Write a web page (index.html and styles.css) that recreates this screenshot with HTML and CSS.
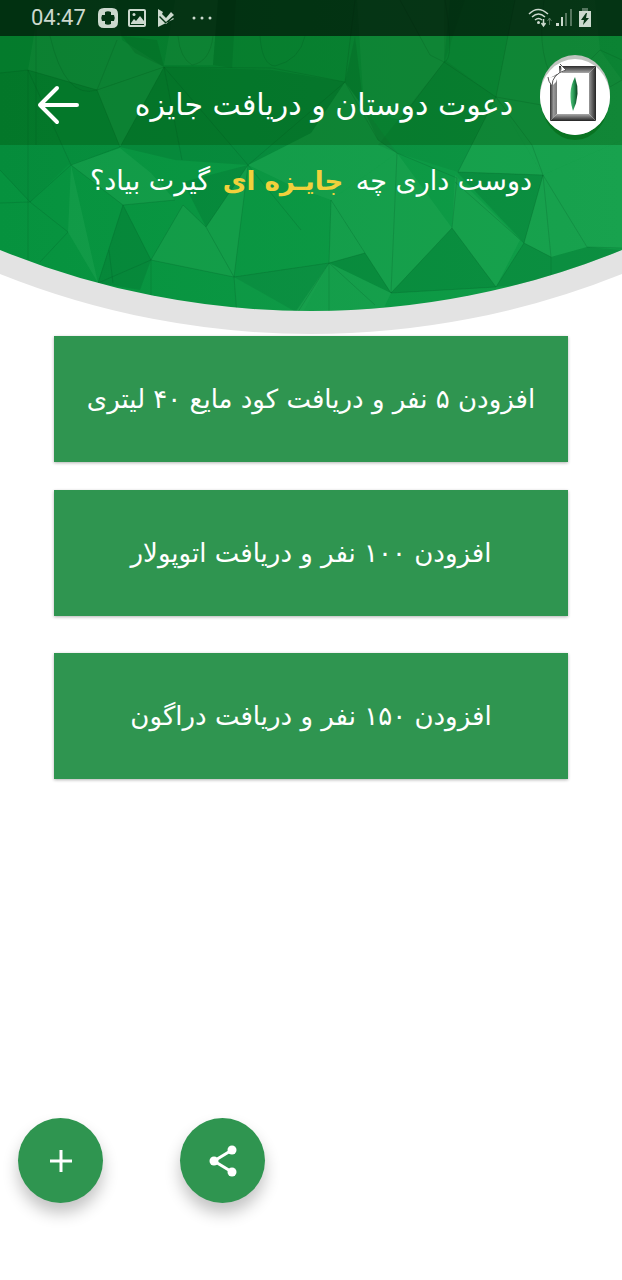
FILE: index.html
```html
<!DOCTYPE html>
<html lang="fa" dir="rtl">
<head>
<meta charset="utf-8">
<meta name="viewport" content="width=device-width, initial-scale=1">
<title>دعوت دوستان و دریافت جایزه</title>
<link rel="stylesheet" href="styles.css">
</head>
<body>
<div class="screen">
  <header class="hero">
    <svg class="hero-art" viewBox="0 0 622 335" preserveAspectRatio="none" aria-hidden="true">
      <defs>
        <linearGradient id="base" x1="0" y1="0" x2="1" y2="0">
          <stop offset="0" stop-color="#06923e"/><stop offset="1" stop-color="#109d48"/>
        </linearGradient>
        <clipPath id="bowl"><path d="M0 0H622V250A823 823 0 0 1 0 250Z"/></clipPath>
      </defs>
      <path d="M0 0H622V274A836 836 0 0 1 0 274Z" fill="#e3e3e3"/>
      <g clip-path="url(#bowl)">
        <rect width="622" height="335" fill="url(#base)"/>
        <g fill="#35b566" fill-opacity=".22">
          <path d="M28 70L40 0L115 0L122 40L164 67L97 90Z"/>
          <path d="M97 90L164 67L120 147Z"/>
          <path d="M71 165L120 148L151 173L175 200L123 205Z"/>
          <path d="M71 165L98 283L68 232Z"/>
          <path d="M164 65L175 0L218 0L213 65Z"/>
          <path d="M183 205L206 227L234 277L151 260Z"/>
          <path d="M248 165L311 133L345 82L397 153L331 200L290 185Z"/>
          <path d="M248 165L206 227L234 277Z"/>
          <path d="M234 277L329 263L300 318L237 318Z" fill-opacity=".1"/>
          <path d="M397 153L452 228L391 293L365 253L331 200Z"/>
          <path d="M331 200L365 253L329 263Z"/>
          <path d="M458 172L496 97L543 175Z"/>
          <path d="M452 228L455 175L520 240L496 287Z"/>
          <path d="M543 175L622 140V248L587 247L551 257L524 243Z"/>
          <path d="M357 0L450 0L444 62L400 120L364 110Z"/>
          <path d="M496 97L515 0H595L600 50L622 80V140L543 175Z"/>
          <path d="M329 263L391 293L382 312L295 312Z"/>
        </g>
        <g fill="#00642b" fill-opacity=".24">
          <path d="M122 36L157 40L164 67L135 53Z"/>
          <path d="M164 67L272 70L345 82L311 133L248 165L175 160L120 147Z"/>
          <path d="M0 73L28 70L97 90L120 147L68 165L30 202L0 170Z" fill-opacity=".12"/>
          <path d="M123 205L151 260L140 290L98 283Z"/>
          <path d="M183 182L248 165L206 227Z"/>
          <path d="M234 277L329 263L296 312Z" fill-opacity=".18"/>
          <path d="M345 82L397 153L378 140L364 110L355 36Z"/>
          <path d="M457 172L543 175L524 243Z"/>
          <path d="M452 228L496 287L391 293Z"/>
          <path d="M524 243L551 257L587 247L622 250L550 282L496 287Z"/>
          <path d="M329 263L365 253L391 293Z"/>
          <path d="M218 0H236L232 68L213 65Z"/>
          <path d="M444 0H465L445 60L496 97L458 172L397 153L378 145L444 62Z" fill-opacity=".12"/>
        </g>
        <g fill="none" stroke="#004f22" stroke-opacity=".2" stroke-width="1">
          <path d="M28 70L97 90L164 67L272 68L345 82M28 70V260M36 0V145M0 73L28 70L71 165L123 205M50 36Q65 100 97 90L117 40M97 90L120 147L164 67L182 160M71 165L30 202L0 170M0 203L30 202L68 232L40 262"/>
          <path d="M120 147L71 165M123 205L175 200M123 205L98 283L151 260L123 205M109 250L113 283M151 260L183 205L206 227L234 277L151 260V300M206 227L248 165L234 277L237 315M248 165L301 230M234 277L329 263M164 67L248 165L345 82"/>
          <path d="M345 82L355 0M345 82L378 140L397 153L391 293L365 253L331 200L329 263L365 253M391 293L452 228L496 287L391 293M397 153L457 178L452 228M458 172L543 175L524 243L455 182M444 62L496 97L458 172M444 62L400 120M496 97L515 0M496 97L570 110L622 80M543 175L551 257L524 243L496 287M543 175L587 247L622 248M551 257V282M543 175L532 145L496 97M544 0Q535 60 560 90L600 50L622 60M445 0Q455 60 444 62L430 55L400 0M329 263L296 315M329 263L375 305M329 263V311M260 36Q262 65 275 66Q300 60 305 36M178 36Q180 58 192 65Q210 62 213 36"/>
        </g>
      </g>
    </svg>

    <div class="hero-bars">
      <div class="status" dir="ltr">
        <span class="clock">04:47</span>
        <svg class="status-icon" viewBox="0 0 20 20"><path fill="currentColor" fill-rule="evenodd" d="M6 0H14Q20 0 20 6V14Q20 20 14 20H6Q0 20 0 14V6Q0 0 6 0ZM7 4V7H4Q2.500 10 4 13H7V16Q10 17.500 13 16V13H16Q17.500 10 16 7H13V4Q10 2.500 7 4Z"/></svg>
        <svg class="status-icon" viewBox="0 0 20 20"><rect x="2" y="2" width="16" height="16" rx="1" fill="none" stroke="currentColor" stroke-width="2"/><path d="M4 15L7 11L9 13L13 8L17 13V16H4Z" fill="currentColor"/><circle cx="7" cy="6.500" r="1.500" fill="currentColor"/></svg>
        <svg class="status-icon" viewBox="0 0 20 20"><path fill="currentColor" d="M2 1L7 4L6 6L10 10L15 4L18 7L10 14L4 8L3 9L10 16L17 10L18 11L2 19Z"/></svg>
        <svg class="status-icon dots" viewBox="0 0 22 20"><g fill="currentColor"><circle cx="3" cy="10" r="1.500"/><circle cx="11" cy="10" r="1.500"/><circle cx="19" cy="10" r="1.500"/></g></svg>
        <span class="spacer"></span>
        <svg class="wifi" viewBox="0 0 24 20"><g fill="none" stroke="currentColor" stroke-width="1.500"><path d="M1 6Q10-3 20 6M4 9Q10.500 3 17 9M7 12Q10.500 9 14 12"/></g><circle cx="10.500" cy="14.500" r="1.500" fill="currentColor"/><path d="M15.500 11V17M13.500 15L15.500 18L17.500 15" fill="none" stroke="currentColor" stroke-width="1.500"/><path d="M21.500 17V11M19.500 13L21.500 10L23.500 13" fill="none" stroke="currentColor" stroke-opacity=".4"/></svg>
        <svg class="signal" viewBox="0 0 17 20"><g fill="currentColor"><path d="M0 15H3V18H0ZM5 9H7V18H5Z"/><path d="M9 5H11V18H9ZM14 1H16V18H14Z" opacity=".4"/></g></svg>
        <svg class="battery" viewBox="0 0 12 20"><path fill="currentColor" opacity=".4" d="M3 0H9V3H3Z"/><path fill="currentColor" fill-rule="evenodd" d="M0 3H12V19H0ZM7 5L2 12H5L4 17L10 10H7L8 5Z"/></svg>
      </div>
      <div class="appbar">
        <svg class="logo" viewBox="0 0 72 88" role="img" aria-label="لوگو">
          <defs>
            <linearGradient id="bar-h" x1="0" y1="0" x2="0" y2="1"><stop offset="0" stop-color="#2b2b2b"/><stop offset="1" stop-color="#aaa"/></linearGradient>
            <linearGradient id="bar-left"><stop offset="0" stop-color="#333"/><stop offset=".5" stop-color="#999"/><stop offset="1" stop-color="#777"/></linearGradient>
            <linearGradient id="bar-right"><stop offset="0" stop-color="#999"/><stop offset="1" stop-color="#222"/></linearGradient>
            <linearGradient id="bar-foot" x1="0" y1="0" x2="0" y2="1"><stop offset="0" stop-color="#aaa"/><stop offset="1" stop-color="#222"/></linearGradient>
            <linearGradient id="leaf"><stop offset="0" stop-color="#52c07a"/><stop offset=".5" stop-color="#259451"/><stop offset="1" stop-color="#073b1c"/></linearGradient>
          </defs>
          <ellipse cx="36" cy="45" rx="34" ry="41" fill="#056b18" opacity=".7"/>
          <ellipse cx="36" cy="41" rx="35" ry="40" fill="#bfc4bf"/>
          <ellipse cx="36" cy="43" rx="35" ry="38" fill="#fff"/>
          <path d="M20 12H57L50 19H20Z" fill="url(#bar-h)"/>
          <path d="M11 24L18 20V60L11 67Z" fill="url(#bar-left)"/>
          <path d="M57 12V67L50 60V19Z" fill="url(#bar-right)"/>
          <path d="M11 67L18 60H50L57 67Z" fill="url(#bar-foot)"/>
          <path d="M21 10L27 16Q19 19 17 28L13 32Q9 27 9 23Q16 24 21 19Q24 15 21 10Z" fill="#fff"/>
          <path d="M9 23Q9 27 13 32Q13 20 27 16L21 10" fill="none" stroke="#555" stroke-width="1"/>
          <path d="M36 23Q28 38 34 57Q42 40 36 23Z" fill="url(#leaf)"/>
        </svg>
        <h1 class="title">دعوت دوستان و دریافت جایزه</h1>
        <button class="back" type="button" aria-label="بازگشت">
          <svg viewBox="0 0 44 44"><path d="M41 22H4M21 5L4 22L21 39" fill="none" stroke="currentColor" stroke-width="4" stroke-linecap="round" stroke-linejoin="round"/></svg>
        </button>
      </div>
    </div>
    <h2 class="question">دوست داری چه <strong>جایـزه ای</strong> گیرت بیاد؟</h2>
  </header>

  <main class="offers">
    <button class="offer" type="button">افزودن ۵ نفر و دریافت کود مایع ۴۰ لیتری</button>
    <button class="offer" type="button">افزودن ۱۰۰ نفر و دریافت اتوپولار</button>
    <button class="offer offer-last" type="button">افزودن ۱۵۰ نفر و دریافت دراگون</button>
  </main>

  <div class="actions" dir="ltr">
    <button class="fab" type="button" aria-label="افزودن"><svg viewBox="0 0 36 36"><path d="M18 7V29M7 18H29" stroke="currentColor" stroke-width="3"/></svg></button>
    <button class="fab" type="button" aria-label="اشتراک گذاری"><svg viewBox="0 0 36 36"><path d="M27 7L9 18L27 29" fill="none" stroke="currentColor" stroke-width="3"/><g fill="currentColor"><circle cx="27" cy="7" r="4.500"/><circle cx="9" cy="18" r="4.500"/><circle cx="27" cy="29" r="4.500"/></g></svg></button>
  </div>
</div>
</body>
</html>
```
FILE: styles.css
```css
* { box-sizing: border-box; }

body {
  margin: 0;
  background: #fff;
  color: #fff;
  font-family: "DejaVu Sans", "Noto Sans", sans-serif;
}

button {
  border: 0;
  padding: 0;
  color: inherit;
  font: inherit;
  cursor: pointer;
}

svg { display: block; }

.screen {
  display: flex;
  flex-direction: column;
  min-height: 100vh;
}

.hero {
  position: relative;
  padding-bottom: 134px;
}

.hero-art {
  position: absolute;
  inset: 0;
  width: 100%;
  height: 100%;
}

.hero-bars {
  position: relative;
  background: rgba(0, 70, 0, 0.29);
}

.status {
  display: flex;
  align-items: center;
  gap: 9px;
  height: 36px;
  padding: 0 31px;
  background: rgba(0, 0, 0, 0.6);
  color: #ccd9ce;
}

.clock {
  margin-right: 3px;
  font: 22px/36px Roboto, sans-serif;
}

.status-icon {
  width: 20px;
  height: 20px;
}

.dots {
  width: 22px;
  margin-left: 6px;
}

.spacer { flex: 1; }

.wifi {
  width: 24px;
  height: 20px;
}

.signal {
  width: 17px;
  height: 20px;
  margin-left: -5px;
}

.battery {
  width: 12px;
  height: 20px;
  margin-left: -3px;
}

.appbar {
  display: flex;
  align-items: center;
  min-height: 109px;
  padding: 0 11px 0 36px;
}

.logo {
  width: 72px;
  height: 88px;
  margin-top: 14px;
}

.title {
  flex: 1;
  margin: 28px 26px 0 0;
  font-size: 30px;
  font-weight: 400;
  line-height: 40px;
}

.back {
  width: 44px;
  height: 44px;
  margin-top: 28px;
  background: none;
}

.question {
  position: relative;
  margin: 0;
  padding-top: 16px;
  font-size: 27px;
  font-weight: 400;
  line-height: 40px;
  text-align: center;
}

.question strong {
  margin: 0 4px;
  color: #f2d13c;
  font-size: 26px;
}

.offers {
  display: flex;
  flex-direction: column;
  gap: 28px;
  padding: 1px 54px 0;
}

.offer {
  min-height: 126px;
  background: #2f9550;
  box-shadow: 0 1px 3px rgba(0, 0, 0, 0.3);
  font-size: 26px;
  line-height: 40px;
}

.offer-last { margin-top: 9px; }

.actions {
  display: flex;
  gap: 77px;
  margin-top: auto;
  padding: 40px 18px 77px;
}

.fab {
  display: grid;
  place-items: center;
  width: 85px;
  height: 85px;
  border-radius: 50%;
  background: #2f9550;
  box-shadow: 0 10px 16px rgba(0, 0, 0, 0.24);
}

.fab svg {
  width: 36px;
  height: 36px;
}
```
